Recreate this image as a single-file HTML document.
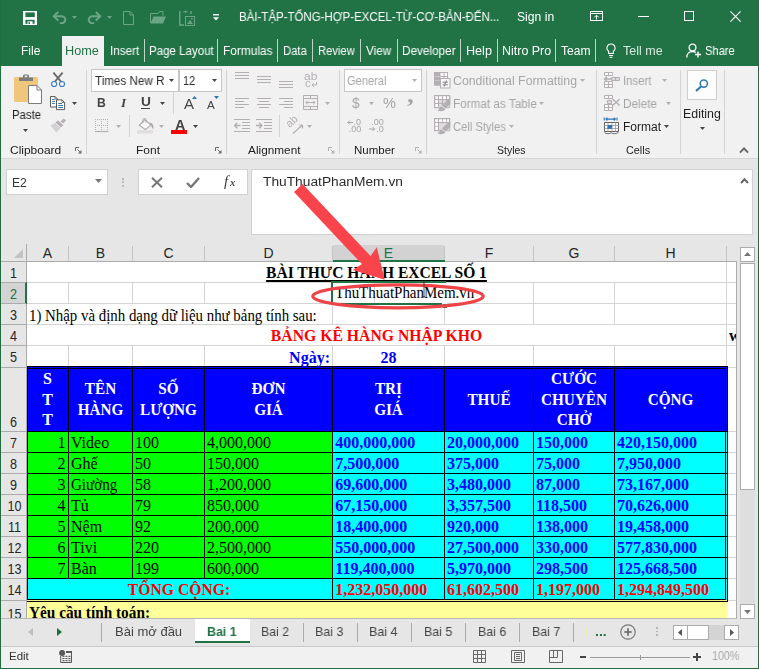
<!DOCTYPE html>
<html lang="vi">
<head>
<meta charset="utf-8">
<title>Excel</title>
<style>
*{box-sizing:border-box;margin:0;padding:0}
html,body{width:759px;height:669px;overflow:hidden;background:#e6e6e6}
body{position:relative;font-family:"Liberation Sans","DejaVu Sans",sans-serif;font-size:12px;color:#262626}
.abs{position:absolute}
.tx{position:absolute;white-space:nowrap;will-change:transform}
#win{position:absolute;left:0;top:0;width:759px;height:669px;overflow:hidden;background:#e6e6e6}
/* frame */
#bl{left:0;top:0;width:1px;height:669px;background:#1e6e40}
#br{left:758px;top:0;width:1px;height:669px;background:#1e6e40}
#bb{left:0;top:668px;width:759px;height:1px;background:#1e6e40}
/* title + tabs */
#title{left:0;top:0;width:759px;height:66px;background:#217346}
.tt{position:absolute;color:#fff;font-size:13px;white-space:nowrap;line-height:16px}
.tab{position:absolute;top:43px;color:#fff;font-size:13px;line-height:16px;white-space:nowrap}
.tsep{position:absolute;top:39px;width:1px;height:23px;background:#9fc3ae}
#home{left:62px;top:36px;width:42px;height:30px;background:#f1f1f1}
#home span{position:absolute;left:4px;top:7px;color:#217346;font-size:13px;line-height:16px}
/* ribbon */
#ribbon{left:1px;top:66px;width:757px;height:92px;background:#f1f1f1}
#ribline{left:1px;top:158px;width:757px;height:1px;background:#d6d6d6}
.gsep{position:absolute;top:71px;width:1px;height:83px;background:#d2d2d2}
.glabel{position:absolute;top:142px;font-size:12px;line-height:14px;color:#262626;white-space:nowrap}
.rt{position:absolute;font-size:12px;line-height:14px;white-space:nowrap;color:#262626}
.dis{color:#a6a6a6}
.combo{position:absolute;background:#fff;border:1px solid #c6c6c6;height:22px;top:70px}
/* formula bar */
.fbox{position:absolute;background:#fff;border:1px solid #d0d0d0}
/* grid */
#grid{left:2px;top:244px;width:735px;height:373px;background:#fff;overflow:hidden}
.ch{position:absolute;top:244px;height:18px;background:#e6e6e6;font-size:14px;line-height:18px;text-align:center;color:#262626}
.rh{position:absolute;left:1px;width:25px;background:#e6e6e6;font-size:14px;line-height:16px;text-align:center;color:#262626}
.hl{position:absolute;height:1px;background:#d4d4d4}
.vl{position:absolute;width:1px;background:#d4d4d4}
.c{position:absolute;white-space:nowrap;font-family:"Liberation Serif","DejaVu Serif",serif;font-size:16px;line-height:20px;color:#000}
.b{font-weight:bold}
/* sheet tabs + status */
#tabsbar{left:2px;top:617px;width:755px;height:28px;background:#e6e6e6}
#status{left:2px;top:645px;width:755px;height:22px;background:#f1f1f1}
.st{position:absolute;top:624px;font-size:13px;line-height:16px;color:#444;white-space:nowrap}
.ssep{position:absolute;top:622px;width:1px;height:19px;background:#b4b4b4}
</style>
</head>
<body>
<div id="win">
<div id="title" class="abs"></div>
<div id="ribbon" class="abs"></div>
<div id="ribline" class="abs"></div>

<svg class="abs" style="left:23px;top:11px;" width="14" height="14" viewBox="0 0 14 14"><rect x="0" y="0" width="14" height="14" fill="#fff"/><rect x="2.4" y="1.4" width="9.4" height="4.7" fill="#217346"/><rect x="2.4" y="8.8" width="9.2" height="4" fill="#217346"/><rect x="4.5" y="10.3" width="5.1" height="3.7" fill="#fff"/><rect x="5.4" y="11.2" width="1.6" height="1.7" fill="#217346"/></svg>
<svg class="abs" style="left:52px;top:11px;" width="15" height="13" viewBox="0 0 15 13"><path d="M6.2 1L1.7 5.2L6.2 9.4" fill="none" stroke="#6aa685" stroke-width="2"/><path d="M2 5.2H9.3A4 3.5 0 0 1 9.3 12.2H7.8" fill="none" stroke="#6aa685" stroke-width="2"/></svg>
<svg class="abs" style="left:72px;top:16px;" width="5" height="3" viewBox="0 0 5 3"><path d="M0 0H5L2.5 3Z" fill="#6aa685"/></svg>
<svg class="abs" style="left:87px;top:11px;" width="15" height="13" viewBox="0 0 15 13"><path d="M8.8 1L13.3 5.2L8.8 9.4" fill="none" stroke="#6aa685" stroke-width="2"/><path d="M13 5.2H5.7A4 3.5 0 0 0 5.7 12.2H7.2" fill="none" stroke="#6aa685" stroke-width="2"/></svg>
<svg class="abs" style="left:107px;top:16px;" width="5" height="3" viewBox="0 0 5 3"><path d="M0 0H5L2.5 3Z" fill="#6aa685"/></svg>
<svg class="abs" style="left:123px;top:11px;" width="11" height="14" viewBox="0 0 11 14"><path d="M0.5 0.5H7L10.5 4V13.5H0.5Z" fill="none" stroke="#6aa685" stroke-width="1"/><path d="M7 0.5V4H10.5" fill="none" stroke="#6aa685" stroke-width="1"/></svg>
<svg class="abs" style="left:150px;top:11px;" width="16" height="13" viewBox="0 0 16 13"><path d="M0.5 12V2.5H8L9.5 0.5H13V5" fill="none" stroke="#6aa685" stroke-width="1"/><path d="M0.5 12.5L3.5 5.5H16L13 12.5Z" fill="#6aa685"/></svg>
<svg class="abs" style="left:179px;top:10px;" width="16" height="16" viewBox="0 0 16 16"><path d="M0.8 1V15H5" fill="none" stroke="#6aa685" stroke-width="1.4"/><path d="M3.5 2.5L6.5 0.5L9.5 2.5Z" fill="#6aa685"/><path d="M12 1V4" stroke="#6aa685" stroke-width="1.4"/><rect x="6.5" y="6.5" width="9" height="9" fill="none" stroke="#6aa685" stroke-width="1"/><path d="M8 14L11 10L14 14Z" fill="#6aa685"/><rect x="12" y="8" width="1.6" height="1.6" fill="#6aa685"/></svg>
<svg class="abs" style="left:212.5px;top:14.3px;" width="6" height="7" viewBox="0 0 6 7"><rect x="0" y="0" width="6" height="1.4" fill="#fff"/><path d="M0 3.2H6L3 6.4Z" fill="#fff"/></svg>
<span class="tx" style="left:239.04px;top:10.34px;font-family:'Liberation Sans','DejaVu Sans',sans-serif;font-size:12px;line-height:14px;color:#fff;transform:scaleX(0.9567);transform-origin:0 0;">BÀI-TẬP-TỔNG-HỢP-EXCEL-TỪ-CƠ-BẢN-ĐẾN...</span>
<span class="tx" style="left:517.49px;top:10.34px;font-family:'Liberation Sans','DejaVu Sans',sans-serif;font-size:12px;line-height:14px;color:#fff;transform:scaleX(1.0141);transform-origin:0 0;">Sign in</span>
<svg class="abs" style="left:590px;top:11px;" width="13" height="10" viewBox="0 0 13 10"><rect x="0.5" y="0.5" width="12" height="9" fill="none" stroke="#fff" stroke-width="1"/><path d="M0.5 2.5H12.5" stroke="#fff" stroke-width="1"/><path d="M6.5 4.5V8.5M4.3 6.4L6.5 4.2L8.7 6.4" fill="none" stroke="#fff" stroke-width="1"/></svg>
<div class="abs" style="left:638px;top:16px;width:11px;height:1px;background:#fff;"></div>
<div class="abs" style="left:684px;top:11px;width:10px;height:10px;background:transparent;border:1px solid #fff"></div>
<svg class="abs" style="left:729.5px;top:11px;" width="11" height="11" viewBox="0 0 11 11"><path d="M0.4 0.4L10.6 10.6M10.6 0.4L0.4 10.6" stroke="#fff" stroke-width="1.1"/></svg>
<span class="tx" style="left:20.50px;top:43.84px;font-family:'Liberation Sans','DejaVu Sans',sans-serif;font-size:12px;line-height:14px;color:#fff;transform:scaleX(1.0000);transform-origin:0 0;">File</span>
<div class="abs" style="left:62px;top:36px;width:42px;height:30px;background:#f1f1f1;"></div>
<span class="tx" style="left:65.44px;top:43.84px;font-family:'Liberation Sans','DejaVu Sans',sans-serif;font-size:12px;line-height:14px;color:#217346;transform:scaleX(1.0557);transform-origin:0 0;">Home</span>
<span class="tx" style="left:109.83px;top:43.84px;font-family:'Liberation Sans','DejaVu Sans',sans-serif;font-size:12px;line-height:14px;color:#fff;transform:scaleX(0.9724);transform-origin:0 0;">Insert</span>
<span class="tx" style="left:148.84px;top:43.84px;font-family:'Liberation Sans','DejaVu Sans',sans-serif;font-size:12px;line-height:14px;color:#fff;transform:scaleX(0.9600);transform-origin:0 0;">Page Layout</span>
<span class="tx" style="left:222.81px;top:43.84px;font-family:'Liberation Sans','DejaVu Sans',sans-serif;font-size:12px;line-height:14px;color:#fff;transform:scaleX(0.9897);transform-origin:0 0;">Formulas</span>
<span class="tx" style="left:282.86px;top:43.84px;font-family:'Liberation Sans','DejaVu Sans',sans-serif;font-size:12px;line-height:14px;color:#fff;transform:scaleX(0.9388);transform-origin:0 0;">Data</span>
<span class="tx" style="left:317.97px;top:43.84px;font-family:'Liberation Sans','DejaVu Sans',sans-serif;font-size:12px;line-height:14px;color:#fff;transform:scaleX(0.9325);transform-origin:0 0;">Review</span>
<span class="tx" style="left:366.20px;top:43.84px;font-family:'Liberation Sans','DejaVu Sans',sans-serif;font-size:12px;line-height:14px;color:#fff;transform:scaleX(0.9709);transform-origin:0 0;">View</span>
<span class="tx" style="left:401.62px;top:43.84px;font-family:'Liberation Sans','DejaVu Sans',sans-serif;font-size:12px;line-height:14px;color:#fff;transform:scaleX(0.9794);transform-origin:0 0;">Developer</span>
<span class="tx" style="left:465.55px;top:43.84px;font-family:'Liberation Sans','DejaVu Sans',sans-serif;font-size:12px;line-height:14px;color:#fff;transform:scaleX(1.0495);transform-origin:0 0;">Help</span>
<span class="tx" style="left:501.56px;top:43.84px;font-family:'Liberation Sans','DejaVu Sans',sans-serif;font-size:12px;line-height:14px;color:#fff;transform:scaleX(1.0391);transform-origin:0 0;">Nitro Pro</span>
<span class="tx" style="left:561.05px;top:43.84px;font-family:'Liberation Sans','DejaVu Sans',sans-serif;font-size:12px;line-height:14px;color:#fff;transform:scaleX(1.0070);transform-origin:0 0;">Team</span>
<div class="abs" style="left:144px;top:39px;width:1px;height:23px;background:#bcd5c6;"></div>
<div class="abs" style="left:217px;top:39px;width:1px;height:23px;background:#bcd5c6;"></div>
<div class="abs" style="left:277px;top:39px;width:1px;height:23px;background:#bcd5c6;"></div>
<div class="abs" style="left:312px;top:39px;width:1px;height:23px;background:#bcd5c6;"></div>
<div class="abs" style="left:360px;top:39px;width:1px;height:23px;background:#bcd5c6;"></div>
<div class="abs" style="left:397px;top:39px;width:1px;height:23px;background:#bcd5c6;"></div>
<div class="abs" style="left:460px;top:39px;width:1px;height:23px;background:#bcd5c6;"></div>
<div class="abs" style="left:497px;top:39px;width:1px;height:23px;background:#bcd5c6;"></div>
<div class="abs" style="left:555px;top:39px;width:1px;height:23px;background:#bcd5c6;"></div>
<div class="abs" style="left:595px;top:39px;width:1px;height:23px;background:#bcd5c6;"></div>
<svg class="abs" style="left:606px;top:43px;" width="10" height="15" viewBox="0 0 10 15"><path d="M5 1A4 4 0 0 1 7.3 8.3V10.5H2.7V8.3A4 4 0 0 1 5 1Z" fill="none" stroke="#fff" stroke-width="1.1"/><path d="M3 12.5H7M3.6 14.3H6.4" stroke="#fff" stroke-width="1"/></svg>
<span class="tx" style="left:622.94px;top:43.84px;font-family:'Liberation Sans','DejaVu Sans',sans-serif;font-size:12px;line-height:14px;color:#d9e8df;transform:scaleX(1.0416);transform-origin:0 0;">Tell me</span>
<svg class="abs" style="left:686px;top:43px;" width="16" height="15" viewBox="0 0 16 15"><circle cx="6.5" cy="4.5" r="3.4" fill="none" stroke="#fff" stroke-width="1.3"/><path d="M0.8 14.5C0.8 10.5 3.5 8.5 6.5 8.5C8 8.5 9 9 9.8 9.6" fill="none" stroke="#fff" stroke-width="1.3"/><path d="M12 8.5V14.5M9 11.5H15" stroke="#fff" stroke-width="1.4"/></svg>
<span class="tx" style="left:704.54px;top:43.84px;font-family:'Liberation Sans','DejaVu Sans',sans-serif;font-size:12px;line-height:14px;color:#fff;transform:scaleX(0.9290);transform-origin:0 0;">Share</span>
<svg class="abs" style="left:13px;top:73px;" width="30" height="32" viewBox="0 0 30 32"><rect x="1" y="4" width="24" height="25" rx="1.5" fill="#eec67c"/><path d="M6 8V4.5H10V3A1.5 1.5 0 0 1 11.5 1.5H14.5A1.5 1.5 0 0 1 16 3V4.5H20V8Z" fill="#7c7c7c"/><rect x="11.7" y="2.6" width="2.6" height="1.6" fill="#f1f1f1"/><path d="M15.5 12.5H24L28.5 17V30.5H15.5Z" fill="#fff" stroke="#7c7c7c" stroke-width="1"/><path d="M24 12.5V17H28.5" fill="none" stroke="#7c7c7c" stroke-width="1"/></svg>
<span class="tx" style="left:11.66px;top:107.54px;font-family:'Liberation Sans','DejaVu Sans',sans-serif;font-size:12px;line-height:14px;color:#1e1e1e;transform:scaleX(0.9436);transform-origin:0 0;">Paste</span>
<svg class="abs" style="left:23px;top:129px;" width="5" height="3" viewBox="0 0 5 3"><path d="M0 0H5L2.5 3Z" fill="#444444"/></svg>
<svg class="abs" style="left:50px;top:72px;" width="16" height="16" viewBox="0 0 16 16"><path d="M3.4 0.6L11.4 10M12.6 0.6L4.6 10" stroke="#686868" stroke-width="1.9" fill="none"/><circle cx="4.1" cy="12" r="2.55" fill="#f1f1f1" stroke="#3b7dc0" stroke-width="1.1"/><circle cx="12" cy="12" r="2.55" fill="#f1f1f1" stroke="#3b7dc0" stroke-width="1.1"/></svg>
<svg class="abs" style="left:50px;top:96px;" width="16" height="15" viewBox="0 0 16 15"><path d="M0.5 0.5H5L7.5 3V11H0.5Z" fill="#fff" stroke="#5a5a5a" stroke-width="1"/><path d="M5 0.5V3H7.5" fill="none" stroke="#5a5a5a" stroke-width="0.8"/><path d="M2 3.5H4.6M2 5.5H5M2 7.5H5" stroke="#2e75b6" stroke-width="0.9"/><path d="M6.5 3.9H12L14.6 6.5V13.6H6.5Z" fill="#fff" stroke="#5a5a5a" stroke-width="1"/><path d="M12 3.9V6.5H14.6" fill="none" stroke="#5a5a5a" stroke-width="0.8"/><path d="M8.3 7.5H12M8.3 9.5H13M8.3 11.5H13" stroke="#2e75b6" stroke-width="1"/></svg>
<svg class="abs" style="left:72px;top:102px;" width="5" height="3" viewBox="0 0 5 3"><path d="M0 0H5L2.5 3Z" fill="#444444"/></svg>
<svg class="abs" style="left:50px;top:118px;" width="17" height="15" viewBox="0 0 17 15"><path d="M0.5 7.8L6.6 14.4L11 9.5L5.5 4.5Z" fill="#d3cfd3"/><path d="M5.5 4.5L11 9.5L13.4 7.2L8 2.2Z" fill="#b5b1b5"/><path d="M10.6 3.2L13 5.4L16 2.6L13.6 0.6Z" fill="#b5b1b5"/><path d="M5.2 4.8L10.8 9.9" stroke="#f1f1f1" stroke-width="0.7"/></svg>
<span class="tx" style="left:10.03px;top:143.66px;font-family:'Liberation Sans','DejaVu Sans',sans-serif;font-size:10.5px;line-height:13px;color:#1e1e1e;transform:scaleX(1.1383);transform-origin:0 0;">Clipboard</span>
<svg class="abs" style="left:75px;top:147px;" width="7" height="7" viewBox="0 0 7 7"><path d="M0.5 4V0.5H4" fill="none" stroke="#6a6a6a" stroke-width="1"/><path d="M2.5 2.5L6 6" stroke="#6a6a6a" stroke-width="1"/><path d="M6.5 3V6.5H3Z" fill="#6a6a6a"/></svg>
<div class="abs" style="left:86px;top:70px;width:1px;height:84px;background:#d4d4d4;"></div>
<div class="abs" style="left:91px;top:69px;width:88px;height:23px;background:#fff;border:1px solid #c6c6c6"></div>
<div class="abs" style="left:179px;top:69px;width:43px;height:23px;background:#fff;border:1px solid #c6c6c6;border-left:1px solid #c6c6c6"></div>
<span class="tx" style="left:94.76px;top:73.64px;font-family:'Liberation Sans','DejaVu Sans',sans-serif;font-size:12px;line-height:14px;color:#2b2b2b;transform:scaleX(0.9696);transform-origin:0 0;">Times New R</span>
<svg class="abs" style="left:169px;top:79px;" width="5" height="3" viewBox="0 0 5 3"><path d="M0 0H5L2.5 3Z" fill="#444444"/></svg>
<span class="tx" style="left:182.50px;top:73.64px;font-family:'Liberation Sans','DejaVu Sans',sans-serif;font-size:12px;line-height:14px;color:#2b2b2b;transform:scaleX(0.9021);transform-origin:0 0;">12</span>
<svg class="abs" style="left:212px;top:79px;" width="5" height="3" viewBox="0 0 5 3"><path d="M0 0H5L2.5 3Z" fill="#444444"/></svg>
<span class="tx" style="left:96.84px;top:95.64px;font-family:'Liberation Sans','DejaVu Sans',sans-serif;font-size:12px;line-height:14px;color:#444444;font-weight:700;transform:scaleX(1.0133);transform-origin:0 0;">B</span>
<span class="tx" style="left:121.00px;top:95.75px;font-family:'Liberation Serif','DejaVu Serif',serif;font-size:12px;line-height:14px;color:#444444;font-weight:700;font-style:italic;transform:scaleX(1.1000);transform-origin:0 0;">I</span>
<span class="tx" style="left:140.64px;top:95.24px;font-family:'Liberation Sans','DejaVu Sans',sans-serif;font-size:12px;line-height:14px;color:#444444;font-weight:700;transform:scaleX(1.1448);transform-origin:0 0;">U</span>
<div class="abs" style="left:141px;top:108px;width:9px;height:1px;background:#444444;"></div>
<svg class="abs" style="left:160px;top:102px;" width="5" height="3" viewBox="0 0 5 3"><path d="M0 0H5L2.5 3Z" fill="#444444"/></svg>
<div class="abs" style="left:173px;top:92px;width:1px;height:22px;background:#d4d4d4;"></div>
<span class="tx" style="left:184.10px;top:95.75px;font-family:'Liberation Sans','DejaVu Sans',sans-serif;font-size:14px;line-height:17px;color:#444444;transform:scaleX(1.0703);transform-origin:0 0;">A</span>
<svg class="abs" style="left:192px;top:96px;" width="5" height="3" viewBox="0 0 5 3"><path d="M0 3H5L2.5 0Z" fill="#2e75b6"/></svg>
<span class="tx" style="left:207.10px;top:98.72px;font-family:'Liberation Sans','DejaVu Sans',sans-serif;font-size:11.2px;line-height:13px;color:#444444;transform:scaleX(1.0400);transform-origin:0 0;">A</span>
<svg class="abs" style="left:214px;top:96px;" width="5" height="3" viewBox="0 0 5 3"><path d="M0 0H5L2.5 3Z" fill="#2e75b6"/></svg>
<svg class="abs" style="left:95px;top:119px;" width="14" height="14" viewBox="0 0 14 14"><path d="M0 0.5H13M0 6.5H13M0.5 0V12M6.5 0V12M12.5 0V12" stroke="#b3afb3" stroke-width="1" stroke-dasharray="1 1" fill="none" shape-rendering="crispEdges"/><path d="M0 12.5H13.5" stroke="#b3afb3" stroke-width="1.2"/></svg>
<svg class="abs" style="left:116px;top:125px;" width="5" height="3" viewBox="0 0 5 3"><path d="M0 0H5L2.5 3Z" fill="#b3afb3"/></svg>
<div class="abs" style="left:129px;top:115px;width:1px;height:22px;background:#d4d4d4;"></div>
<svg class="abs" style="left:137px;top:117px;" width="18" height="17" viewBox="0 0 18 17"><path d="M2.3 8.2L8 2.6L14.1 8.2L8.3 12.4Z" fill="#f8f8f8" stroke="#b3afb3" stroke-width="1.2"/><path d="M5.9 6.2V3A1.5 1.5 0 0 1 8.9 3V5.8" fill="none" stroke="#b3afb3" stroke-width="1.1"/><path d="M12.4 5.4C15.6 5.8 17 8 16.3 12.2C15 10.9 14.5 9.6 14.3 8.3Z" fill="#aaa6aa"/><rect x="0.2" y="13.1" width="15.8" height="3.5" fill="#e0dde0"/></svg>
<svg class="abs" style="left:159px;top:125px;" width="5" height="3" viewBox="0 0 5 3"><path d="M0 0H5L2.5 3Z" fill="#b3afb3"/></svg>
<span class="tx" style="left:174.54px;top:117.12px;font-family:'Liberation Sans','DejaVu Sans',sans-serif;font-size:13.8px;line-height:17px;color:#444444;font-weight:700;transform:scaleX(1.0378);transform-origin:0 0;">A</span>
<div class="abs" style="left:171px;top:130px;width:16px;height:4px;background:#ff0000;"></div>
<svg class="abs" style="left:193px;top:125px;" width="5" height="3" viewBox="0 0 5 3"><path d="M0 0H5L2.5 3Z" fill="#444444"/></svg>
<span class="tx" style="left:135.64px;top:143.66px;font-family:'Liberation Sans','DejaVu Sans',sans-serif;font-size:10.5px;line-height:13px;color:#1e1e1e;transform:scaleX(1.1407);transform-origin:0 0;">Font</span>
<svg class="abs" style="left:215px;top:147px;" width="7" height="7" viewBox="0 0 7 7"><path d="M0.5 4V0.5H4" fill="none" stroke="#6a6a6a" stroke-width="1"/><path d="M2.5 2.5L6 6" stroke="#6a6a6a" stroke-width="1"/><path d="M6.5 3V6.5H3Z" fill="#6a6a6a"/></svg>
<div class="abs" style="left:226px;top:70px;width:1px;height:84px;background:#d4d4d4;"></div>
<div class="abs" style="left:235px;top:72px;width:14px;height:1px;background:#b3afb3;"></div><div class="abs" style="left:235px;top:75px;width:14px;height:1px;background:#b3afb3;"></div><div class="abs" style="left:235px;top:78px;width:14px;height:1px;background:#b3afb3;"></div>
<div class="abs" style="left:257px;top:76px;width:14px;height:1px;background:#b3afb3;"></div><div class="abs" style="left:257px;top:79px;width:14px;height:1px;background:#b3afb3;"></div><div class="abs" style="left:257px;top:82px;width:14px;height:1px;background:#b3afb3;"></div>
<div class="abs" style="left:279px;top:81px;width:14px;height:1px;background:#b3afb3;"></div><div class="abs" style="left:279px;top:84px;width:14px;height:1px;background:#b3afb3;"></div><div class="abs" style="left:279px;top:87px;width:14px;height:1px;background:#b3afb3;"></div>
<span class="tx" style="left:304.13px;top:70.06px;font-family:'Liberation Sans','DejaVu Sans',sans-serif;font-size:10.5px;line-height:13px;color:#b3afb3;transform:scaleX(1.1442);transform-origin:0 0;">ab</span>
<span class="tx" style="left:304.94px;top:77.06px;font-family:'Liberation Sans','DejaVu Sans',sans-serif;font-size:10.5px;line-height:13px;color:#b3afb3;transform:scaleX(1.1111);transform-origin:0 0;">c</span>
<svg class="abs" style="left:311px;top:82px;" width="6" height="5" viewBox="0 0 6 5"><path d="M5.5 0V3H1.2M2.8 1.2L1 3L2.8 4.8" fill="none" stroke="#b3afb3" stroke-width="1"/></svg>
<div class="abs" style="left:235px;top:98px;width:14px;height:1px;background:#b3afb3;"></div><div class="abs" style="left:235px;top:101px;width:9px;height:1px;background:#b3afb3;"></div><div class="abs" style="left:235px;top:104px;width:14px;height:1px;background:#b3afb3;"></div><div class="abs" style="left:235px;top:107px;width:9px;height:1px;background:#b3afb3;"></div>
<div class="abs" style="left:257px;top:98px;width:14px;height:1px;background:#b3afb3;"></div><div class="abs" style="left:259px;top:101px;width:10px;height:1px;background:#b3afb3;"></div><div class="abs" style="left:257px;top:104px;width:14px;height:1px;background:#b3afb3;"></div><div class="abs" style="left:259px;top:107px;width:10px;height:1px;background:#b3afb3;"></div>
<div class="abs" style="left:279px;top:98px;width:14px;height:1px;background:#b3afb3;"></div><div class="abs" style="left:284px;top:101px;width:9px;height:1px;background:#b3afb3;"></div><div class="abs" style="left:279px;top:104px;width:14px;height:1px;background:#b3afb3;"></div><div class="abs" style="left:284px;top:107px;width:9px;height:1px;background:#b3afb3;"></div>
<svg class="abs" style="left:303px;top:95px;" width="15" height="15" viewBox="0 0 15 15"><path d="M0.5 0.5H14.5V14.5H0.5ZM0.5 3.5H14.5M0.5 11.5H14.5M7.5 0.5V3.5M7.5 11.5V14.5" fill="none" stroke="#b3afb3" stroke-width="1"/><path d="M3 7.5H12M4.8 5.7L3 7.5L4.8 9.3M10.2 5.7L12 7.5L10.2 9.3" fill="none" stroke="#b3afb3" stroke-width="1"/></svg>
<svg class="abs" style="left:325px;top:102px;" width="5" height="3" viewBox="0 0 5 3"><path d="M0 0H5L2.5 3Z" fill="#b3afb3"/></svg>
<svg class="abs" style="left:234px;top:119px;" width="16" height="14" viewBox="0 0 16 14"><path d="M0 0.5H16M8 3.5H16M8 6.5H16M8 9.5H16M0 12.5H16" stroke="#b3afb3" stroke-width="1"/><path d="M6.5 6.5H0.8M3.3 3.8L0.6 6.5L3.3 9.2" fill="none" stroke="#b3afb3" stroke-width="1.4"/></svg>
<svg class="abs" style="left:256px;top:119px;" width="16" height="14" viewBox="0 0 16 14"><path d="M0 0.5H16M8 3.5H16M8 6.5H16M8 9.5H16M0 12.5H16" stroke="#b3afb3" stroke-width="1"/><path d="M0 6.5H5.7M3.2 3.8L5.9 6.5L3.2 9.2" fill="none" stroke="#b3afb3" stroke-width="1.4"/></svg>
<div class="abs" style="left:279px;top:115px;width:1px;height:22px;background:#d4d4d4;"></div>
<svg class="abs" style="left:286px;top:116px;" width="19" height="19" viewBox="0 0 19 19"><text x="0" y="0" transform="translate(3.5,12) rotate(-42)" font-family="Liberation Sans,sans-serif" font-size="11" fill="#b3afb3">ab</text><path d="M7 17.5L16.5 9M16.5 9H13M16.5 9V12.4" fill="none" stroke="#b3afb3" stroke-width="1.2"/></svg>
<svg class="abs" style="left:307px;top:125px;" width="5" height="3" viewBox="0 0 5 3"><path d="M0 0H5L2.5 3Z" fill="#b3afb3"/></svg>
<span class="tx" style="left:248.00px;top:143.66px;font-family:'Liberation Sans','DejaVu Sans',sans-serif;font-size:10.5px;line-height:13px;color:#1e1e1e;transform:scaleX(1.1251);transform-origin:0 0;">Alignment</span>
<svg class="abs" style="left:328px;top:147px;" width="7" height="7" viewBox="0 0 7 7"><path d="M0.5 4V0.5H4" fill="none" stroke="#b3afb3" stroke-width="1"/><path d="M2.5 2.5L6 6" stroke="#b3afb3" stroke-width="1"/><path d="M6.5 3V6.5H3Z" fill="#b3afb3"/></svg>
<div class="abs" style="left:339px;top:70px;width:1px;height:84px;background:#d4d4d4;"></div>
<div class="abs" style="left:344px;top:69px;width:78px;height:23px;background:#fff;border:1px solid #c6c6c6"></div>
<span class="tx" style="left:347.34px;top:73.64px;font-family:'Liberation Sans','DejaVu Sans',sans-serif;font-size:12px;line-height:14px;color:#a6a6a6;transform:scaleX(0.9253);transform-origin:0 0;">General</span>
<svg class="abs" style="left:412px;top:79px;" width="5" height="3" viewBox="0 0 5 3"><path d="M0 0H5L2.5 3Z" fill="#b3afb3"/></svg>
<span class="tx" style="left:351.78px;top:93.13px;font-family:'Liberation Sans','DejaVu Sans',sans-serif;font-size:15.5px;line-height:19px;color:#a6a6a6;transform:scaleX(0.8848);transform-origin:0 0;">$</span>
<svg class="abs" style="left:369px;top:102px;" width="5" height="3" viewBox="0 0 5 3"><path d="M0 0H5L2.5 3Z" fill="#b3afb3"/></svg>
<span class="tx" style="left:383.30px;top:95.08px;font-family:'Liberation Sans','DejaVu Sans',sans-serif;font-size:14.5px;line-height:17px;color:#a6a6a6;transform:scaleX(0.9917);transform-origin:0 0;">%</span>
<span class="tx" style="left:407.11px;top:80.54px;font-family:'Liberation Serif','DejaVu Serif',serif;font-size:23px;line-height:28px;color:#a6a6a6;font-weight:700;transform:scaleX(1.1789);transform-origin:0 0;">,</span>
<svg class="abs" style="left:347px;top:119px;" width="16" height="14" viewBox="0 0 16 14"><path d="M6 3.5H0.8M2.8 1.5L0.8 3.5L2.8 5.5" fill="none" stroke="#a6a6a6" stroke-width="1"/><text x="6.5" y="6" font-family="Liberation Sans,sans-serif" font-size="9" fill="#a6a6a6">.0</text><text x="1.8" y="12.8" font-family="Liberation Sans,sans-serif" font-size="9" fill="#a6a6a6">.00</text></svg>
<svg class="abs" style="left:369px;top:119px;" width="16" height="14" viewBox="0 0 16 14"><text x="2.2" y="6" font-family="Liberation Sans,sans-serif" font-size="9" fill="#a6a6a6">.00</text><path d="M0 10H5.6M3.6 8L5.6 10L3.6 12" fill="none" stroke="#a6a6a6" stroke-width="1"/><text x="7.2" y="12.8" font-family="Liberation Sans,sans-serif" font-size="9" fill="#a6a6a6">.0</text></svg>
<span class="tx" style="left:353.78px;top:143.66px;font-family:'Liberation Sans','DejaVu Sans',sans-serif;font-size:10.5px;line-height:13px;color:#1e1e1e;transform:scaleX(1.0959);transform-origin:0 0;">Number</span>
<svg class="abs" style="left:415px;top:147px;" width="7" height="7" viewBox="0 0 7 7"><path d="M0.5 4V0.5H4" fill="none" stroke="#b3afb3" stroke-width="1"/><path d="M2.5 2.5L6 6" stroke="#b3afb3" stroke-width="1"/><path d="M6.5 3V6.5H3Z" fill="#b3afb3"/></svg>
<div class="abs" style="left:426px;top:70px;width:1px;height:84px;background:#d4d4d4;"></div>
<svg class="abs" style="left:434px;top:72px;" width="17" height="17" viewBox="0 0 17 17"><rect x="0.5" y="0.5" width="13" height="12.5" fill="#fafafa" stroke="#b3afb3" stroke-width="1"/><rect x="0" y="0" width="6.5" height="13.5" fill="#b3afb3"/><path d="M0.5 4.5H6.5M0.5 8.5H6.5" stroke="#cdcacd" stroke-width="0.8"/><path d="M10 0.5V7M6.5 4.5H13.5" stroke="#b3afb3" stroke-width="1"/><rect x="6.5" y="6.5" width="9.5" height="9.5" fill="#f6f6f6" stroke="#b3afb3" stroke-width="1"/><path d="M8.6 10.2H13.9M8.6 12.8H13.9M12.6 8.4L9.9 14.4" stroke="#8a878a" stroke-width="1.1"/></svg>
<span class="tx" style="left:453.19px;top:73.64px;font-family:'Liberation Sans','DejaVu Sans',sans-serif;font-size:12px;line-height:14px;color:#a6a6a6;transform:scaleX(1.0276);transform-origin:0 0;">Conditional Formatting</span>
<svg class="abs" style="left:580px;top:79px;" width="5" height="3" viewBox="0 0 5 3"><path d="M0 0H5L2.5 3Z" fill="#b3afb3"/></svg>
<svg class="abs" style="left:434px;top:95px;" width="17" height="17" viewBox="0 0 17 17"><rect x="0.6" y="0.6" width="15" height="12" fill="#fafafa" stroke="#b3afb3" stroke-width="1.2"/><rect x="4.5" y="4.5" width="11" height="8" fill="#dedbde"/><path d="M4.5 0.5V12.5M8.5 0.5V12.5M12.5 0.5V12.5M0.5 4.5H15.5M0.5 8.5H15.5" fill="none" stroke="#b3afb3" stroke-width="1"/><path d="M16.3 2.4V9.2L11 13.6L7.2 11.2Z" fill="#b3afb3"/><path d="M6.8 10.4L11.8 14.2" stroke="#ececec" stroke-width="0.9"/><path d="M7 11.4C5.2 11.8 5.6 14.2 3.4 15.7C7.4 16.7 11 15.9 11.4 14Z" fill="#b3afb3"/></svg>
<svg class="abs" style="left:434px;top:118px;" width="17" height="17" viewBox="0 0 17 17"><rect x="0.6" y="0.6" width="15" height="12" fill="#fafafa" stroke="#b3afb3" stroke-width="1.2"/><rect x="4.5" y="4.5" width="11" height="8" fill="#dedbde"/><path d="M4.5 0.5V12.5M0.5 4.5H15.5" fill="none" stroke="#b3afb3" stroke-width="1"/><path d="M0.5 8.5H4.5M8.5 0.5V4.5M12.5 0.5V4.5" fill="none" stroke="#b3afb3" stroke-width="0.8"/><path d="M16.3 2.4V9.2L11 13.6L7.2 11.2Z" fill="#b3afb3"/><path d="M6.8 10.4L11.8 14.2" stroke="#ececec" stroke-width="0.9"/><path d="M7 11.4C5.2 11.8 5.6 14.2 3.4 15.7C7.4 16.7 11 15.9 11.4 14Z" fill="#b3afb3"/></svg>
<span class="tx" style="left:452.72px;top:96.84px;font-family:'Liberation Sans','DejaVu Sans',sans-serif;font-size:12px;line-height:14px;color:#a6a6a6;transform:scaleX(0.9769);transform-origin:0 0;">Format as Table</span>
<svg class="abs" style="left:539px;top:102px;" width="5" height="3" viewBox="0 0 5 3"><path d="M0 0H5L2.5 3Z" fill="#b3afb3"/></svg>
<span class="tx" style="left:453.23px;top:119.64px;font-family:'Liberation Sans','DejaVu Sans',sans-serif;font-size:12px;line-height:14px;color:#a6a6a6;transform:scaleX(0.9327);transform-origin:0 0;">Cell Styles</span>
<svg class="abs" style="left:509px;top:125px;" width="5" height="3" viewBox="0 0 5 3"><path d="M0 0H5L2.5 3Z" fill="#b3afb3"/></svg>
<span class="tx" style="left:497.00px;top:143.66px;font-family:'Liberation Sans','DejaVu Sans',sans-serif;font-size:10.5px;line-height:13px;color:#1e1e1e;transform:scaleX(0.9910);transform-origin:0 0;">Styles</span>
<div class="abs" style="left:596px;top:70px;width:1px;height:84px;background:#d4d4d4;"></div>
<svg class="abs" style="left:603px;top:72px;" width="18" height="16" viewBox="0 0 18 16"><path d="M1.5 0.5H9.5V3.5H1.5ZM5.5 0.5V3.5M1.5 9.5H9.5V15.5H1.5ZM5.5 9.5V15.5M1.5 12.5H9.5" fill="#f8f8f8" stroke="#b3afb3" stroke-width="1"/><path d="M8.5 5.5H16.5V8.5H8.5ZM12.5 5.5V8.5" fill="#dedbde" stroke="#b3afb3" stroke-width="1"/><path d="M8 7H1.6M3.9 4.7L1.5 7L3.9 9.3" fill="none" stroke="#b3afb3" stroke-width="1.4"/></svg>
<span class="tx" style="left:623.36px;top:73.64px;font-family:'Liberation Sans','DejaVu Sans',sans-serif;font-size:12px;line-height:14px;color:#a6a6a6;transform:scaleX(0.9448);transform-origin:0 0;">Insert</span>
<svg class="abs" style="left:662px;top:79px;" width="5" height="3" viewBox="0 0 5 3"><path d="M0 0H5L2.5 3Z" fill="#b3afb3"/></svg>
<svg class="abs" style="left:603px;top:95px;" width="18" height="16" viewBox="0 0 18 16"><path d="M1.5 0.5H9.5V3.5H1.5ZM5.5 0.5V3.5M1.5 9.5H9.5V15.5H1.5ZM5.5 9.5V15.5M1.5 12.5H9.5" fill="#f8f8f8" stroke="#b3afb3" stroke-width="1"/><path d="M4.5 5.5H8.5V8.5H4.5Z" fill="#dedbde" stroke="#b3afb3" stroke-width="1"/><path d="M9.6 4L16.6 10.6M16.6 4L9.6 10.6" stroke="#b3afb3" stroke-width="1.4"/></svg>
<span class="tx" style="left:622.52px;top:96.84px;font-family:'Liberation Sans','DejaVu Sans',sans-serif;font-size:12px;line-height:14px;color:#a6a6a6;transform:scaleX(0.9774);transform-origin:0 0;">Delete</span>
<svg class="abs" style="left:666px;top:102px;" width="5" height="3" viewBox="0 0 5 3"><path d="M0 0H5L2.5 3Z" fill="#b3afb3"/></svg>
<svg class="abs" style="left:603px;top:117px;" width="17" height="18" viewBox="0 0 17 18"><path d="M1.2 0.6V3.6M14 0.6V3.6M2.6 2.1H12.6M4.4 0.7L2.9 2.1L4.4 3.5M10.8 0.7L12.3 2.1L10.8 3.5" fill="none" stroke="#2e75b6" stroke-width="1.1"/><path d="M1.5 5.5H15.5V14.5H1.5Z" fill="#fff" stroke="#5e5e5e" stroke-width="1"/><path d="M1.5 8.5H15.5M1.5 11.5H15.5M5 5.5V14.5M9 5.5V14.5M12.5 5.5V14.5" fill="none" stroke="#a0a0a0" stroke-width="0.9"/><rect x="4.5" y="8" width="4.6" height="3.8" fill="#2e75b6"/><path d="M1.5 15.6C3.5 17 6.5 17 8.2 15.8C10 17 13 17 15.5 15.6" fill="none" stroke="#5e5e5e" stroke-width="0.9"/></svg>
<span class="tx" style="left:623.31px;top:119.84px;font-family:'Liberation Sans','DejaVu Sans',sans-serif;font-size:12px;line-height:14px;color:#1e1e1e;transform:scaleX(0.9919);transform-origin:0 0;">Format</span>
<svg class="abs" style="left:664px;top:125px;" width="5" height="3" viewBox="0 0 5 3"><path d="M0 0H5L2.5 3Z" fill="#444444"/></svg>
<span class="tx" style="left:625.98px;top:143.66px;font-family:'Liberation Sans','DejaVu Sans',sans-serif;font-size:10.5px;line-height:13px;color:#1e1e1e;transform:scaleX(1.0311);transform-origin:0 0;">Cells</span>
<div class="abs" style="left:680px;top:70px;width:1px;height:84px;background:#d4d4d4;"></div>
<div class="abs" style="left:687px;top:70px;width:30px;height:30px;background:#fdfdfd;border:1px solid #cdcdcd"></div>
<svg class="abs" style="left:695px;top:79px;" width="14" height="13" viewBox="0 0 14 13"><circle cx="8.8" cy="4.6" r="3.6" fill="none" stroke="#2e75b6" stroke-width="1.5"/><path d="M6 7.5L1 12" stroke="#2e75b6" stroke-width="2"/></svg>
<span class="tx" style="left:683.47px;top:106.64px;font-family:'Liberation Sans','DejaVu Sans',sans-serif;font-size:12px;line-height:14px;color:#1e1e1e;transform:scaleX(1.0314);transform-origin:0 0;">Editing</span>
<svg class="abs" style="left:700px;top:127px;" width="5" height="3" viewBox="0 0 5 3"><path d="M0 0H5L2.5 3Z" fill="#444444"/></svg>
<div class="abs" style="left:724px;top:70px;width:1px;height:84px;background:#d4d4d4;"></div>
<svg class="abs" style="left:738.5px;top:146px;" width="10" height="8" viewBox="0 0 10 8"><path d="M1 6.6L5 2.4L9 6.6" fill="none" stroke="#666" stroke-width="2"/></svg>
<div class="abs" style="left:6px;top:169px;width:102px;height:26px;background:#fff;border:1px solid #d0d0d0"></div>
<span class="tx" style="left:12.29px;top:175.54px;font-family:'Liberation Sans','DejaVu Sans',sans-serif;font-size:12px;line-height:14px;color:#333;transform:scaleX(1.0113);transform-origin:0 0;">E2</span>
<svg class="abs" style="left:94.5px;top:179px;" width="7" height="4" viewBox="0 0 7 4"><path d="M0 0H7L3.5 4Z" fill="#777"/></svg>
<div class="abs" style="left:122px;top:177.5px;width:2px;height:2px;background:#b9b9b9;"></div>
<div class="abs" style="left:122px;top:181px;width:2px;height:2px;background:#b9b9b9;"></div>
<div class="abs" style="left:122px;top:184.5px;width:2px;height:2px;background:#b9b9b9;"></div>
<div class="abs" style="left:138px;top:169px;width:110px;height:26px;background:#fff;border:1px solid #d0d0d0"></div>
<svg class="abs" style="left:151px;top:177px;" width="12" height="11" viewBox="0 0 12 11"><path d="M1 0.8L11 10.2M11 0.8L1 10.2" stroke="#777" stroke-width="2"/></svg>
<svg class="abs" style="left:186px;top:177px;" width="14" height="11" viewBox="0 0 14 11"><path d="M1 6L5 10L13 1" fill="none" stroke="#777" stroke-width="2.4"/></svg>
<span class="tx" style="left:223.95px;top:171.64px;font-family:'Liberation Serif','DejaVu Serif',serif;font-size:15px;line-height:18px;color:#3a3a3a;font-style:italic;">f</span>
<span class="tx" style="left:230.25px;top:176.26px;font-family:'Liberation Serif','DejaVu Serif',serif;font-size:10.5px;line-height:13px;color:#4a4a4a;font-weight:700;font-style:italic;">x</span>
<div class="abs" style="left:251px;top:169px;width:502px;height:66px;background:#fff;border:1px solid #d0d0d0"></div>
<span class="tx" style="left:263.21px;top:175.44px;font-family:'Liberation Sans','DejaVu Sans',sans-serif;font-size:12px;line-height:14px;color:#2b2b2b;transform:scaleX(1.1463);transform-origin:0 0;">ThuThuatPhanMem.vn</span>
<svg class="abs" style="left:740px;top:177px;" width="9" height="7" viewBox="0 0 9 7"><path d="M1 6L4.5 2.3L8 6" fill="none" stroke="#666" stroke-width="2"/></svg>
<div class="abs" style="left:1px;top:244px;width:736px;height:374px;background:#fff;"></div>
<div class="abs" style="left:1px;top:244px;width:736px;height:18px;background:#e6e6e6;"></div>
<div class="abs" style="left:1px;top:261px;width:736px;height:1px;background:#ababab;"></div>
<div class="abs" style="left:1px;top:262px;width:25px;height:356px;background:#e6e6e6;"></div>
<div class="abs" style="left:26px;top:244px;width:1px;height:374px;background:#ababab;"></div>
<svg class="abs" style="left:14px;top:249px;" width="9" height="9" viewBox="0 0 9 9"><path d="M9 0V9H0Z" fill="#c2c2c2"/></svg>
<div class="abs" style="left:68px;top:246px;width:1px;height:15px;background:#c4c4c4;"></div>
<div class="abs" style="left:132px;top:246px;width:1px;height:15px;background:#c4c4c4;"></div>
<div class="abs" style="left:204px;top:246px;width:1px;height:15px;background:#c4c4c4;"></div>
<div class="abs" style="left:332px;top:246px;width:1px;height:15px;background:#c4c4c4;"></div>
<div class="abs" style="left:444px;top:246px;width:1px;height:15px;background:#c4c4c4;"></div>
<div class="abs" style="left:533px;top:246px;width:1px;height:15px;background:#c4c4c4;"></div>
<div class="abs" style="left:614px;top:246px;width:1px;height:15px;background:#c4c4c4;"></div>
<div class="abs" style="left:726px;top:246px;width:1px;height:15px;background:#c4c4c4;"></div>
<div class="abs" style="left:333px;top:245px;width:111px;height:15px;background:#d2d2d2;"></div>
<div class="abs" style="left:333px;top:260px;width:112px;height:2px;background:#217346;"></div>
<div class="ch" style="left:27px;width:41px;color:#262626;background:transparent">A</div>
<div class="ch" style="left:69px;width:63px;color:#262626;background:transparent">B</div>
<div class="ch" style="left:133px;width:71px;color:#262626;background:transparent">C</div>
<div class="ch" style="left:205px;width:127px;color:#262626;background:transparent">D</div>
<div class="ch" style="left:333px;width:111px;color:#217346;background:transparent">E</div>
<div class="ch" style="left:445px;width:88px;color:#262626;background:transparent">F</div>
<div class="ch" style="left:534px;width:80px;color:#262626;background:transparent">G</div>
<div class="ch" style="left:615px;width:111px;color:#262626;background:transparent">H</div>
<div class="abs" style="left:1px;top:282px;width:25px;height:21px;background:#d4d4d4;"></div>
<div class="abs" style="left:25px;top:282px;width:2px;height:22px;background:#217346;"></div>
<div class="rh" style="top:265px;color:#262626;background:transparent;transform:scaleX(0.9)">1</div>
<div class="abs" style="left:1px;top:282px;width:25px;height:1px;background:#ababab;"></div>
<div class="rh" style="top:286px;color:#217346;background:transparent;transform:scaleX(0.9)">2</div>
<div class="abs" style="left:1px;top:303px;width:25px;height:1px;background:#ababab;"></div>
<div class="rh" style="top:307px;color:#262626;background:transparent;transform:scaleX(0.9)">3</div>
<div class="abs" style="left:1px;top:324px;width:25px;height:1px;background:#ababab;"></div>
<div class="rh" style="top:328px;color:#262626;background:transparent;transform:scaleX(0.9)">4</div>
<div class="abs" style="left:1px;top:345px;width:25px;height:1px;background:#ababab;"></div>
<div class="rh" style="top:349px;color:#262626;background:transparent;transform:scaleX(0.9)">5</div>
<div class="abs" style="left:1px;top:367px;width:25px;height:1px;background:#ababab;"></div>
<div class="rh" style="top:414px;color:#262626;background:transparent;transform:scaleX(0.9)">6</div>
<div class="abs" style="left:1px;top:431px;width:25px;height:1px;background:#ababab;"></div>
<div class="rh" style="top:435px;color:#262626;background:transparent;transform:scaleX(0.9)">7</div>
<div class="abs" style="left:1px;top:452px;width:25px;height:1px;background:#ababab;"></div>
<div class="rh" style="top:456px;color:#262626;background:transparent;transform:scaleX(0.9)">8</div>
<div class="abs" style="left:1px;top:473px;width:25px;height:1px;background:#ababab;"></div>
<div class="rh" style="top:477px;color:#262626;background:transparent;transform:scaleX(0.9)">9</div>
<div class="abs" style="left:1px;top:494px;width:25px;height:1px;background:#ababab;"></div>
<div class="rh" style="top:498px;left:2px;color:#262626;background:transparent;transform:scaleX(0.9)">10</div>
<div class="abs" style="left:1px;top:515px;width:25px;height:1px;background:#ababab;"></div>
<div class="rh" style="top:519px;left:2px;color:#262626;background:transparent;transform:scaleX(0.9)">11</div>
<div class="abs" style="left:1px;top:536px;width:25px;height:1px;background:#ababab;"></div>
<div class="rh" style="top:540px;left:2px;color:#262626;background:transparent;transform:scaleX(0.9)">12</div>
<div class="abs" style="left:1px;top:557px;width:25px;height:1px;background:#ababab;"></div>
<div class="rh" style="top:561px;left:2px;color:#262626;background:transparent;transform:scaleX(0.9)">13</div>
<div class="abs" style="left:1px;top:578px;width:25px;height:1px;background:#ababab;"></div>
<div class="rh" style="top:582px;left:2px;color:#262626;background:transparent;transform:scaleX(0.9)">14</div>
<div class="abs" style="left:1px;top:600px;width:25px;height:1px;background:#ababab;"></div>
<div class="rh" style="top:606px;left:2px;color:#262626;background:transparent;transform:scaleX(0.9)">15</div>
<div class="abs" style="left:27px;top:282px;width:710px;height:1px;background:#d4d4d4;"></div>
<div class="abs" style="left:27px;top:303px;width:710px;height:1px;background:#d4d4d4;"></div>
<div class="abs" style="left:27px;top:324px;width:710px;height:1px;background:#d4d4d4;"></div>
<div class="abs" style="left:27px;top:345px;width:710px;height:1px;background:#d4d4d4;"></div>
<div class="abs" style="left:27px;top:367px;width:710px;height:1px;background:#d4d4d4;"></div>
<div class="abs" style="left:68px;top:283px;width:1px;height:20px;background:#d4d4d4;"></div>
<div class="abs" style="left:68px;top:346px;width:1px;height:20px;background:#d4d4d4;"></div>
<div class="abs" style="left:132px;top:283px;width:1px;height:20px;background:#d4d4d4;"></div>
<div class="abs" style="left:132px;top:346px;width:1px;height:20px;background:#d4d4d4;"></div>
<div class="abs" style="left:204px;top:283px;width:1px;height:20px;background:#d4d4d4;"></div>
<div class="abs" style="left:204px;top:346px;width:1px;height:20px;background:#d4d4d4;"></div>
<div class="abs" style="left:332px;top:283px;width:1px;height:20px;background:#d4d4d4;"></div>
<div class="abs" style="left:332px;top:346px;width:1px;height:20px;background:#d4d4d4;"></div>
<div class="abs" style="left:444px;top:283px;width:1px;height:20px;background:#d4d4d4;"></div>
<div class="abs" style="left:444px;top:346px;width:1px;height:20px;background:#d4d4d4;"></div>
<div class="abs" style="left:533px;top:283px;width:1px;height:20px;background:#d4d4d4;"></div>
<div class="abs" style="left:533px;top:346px;width:1px;height:20px;background:#d4d4d4;"></div>
<div class="abs" style="left:614px;top:283px;width:1px;height:20px;background:#d4d4d4;"></div>
<div class="abs" style="left:614px;top:346px;width:1px;height:20px;background:#d4d4d4;"></div>
<div class="abs" style="left:726px;top:283px;width:1px;height:20px;background:#d4d4d4;"></div>
<div class="abs" style="left:726px;top:346px;width:1px;height:20px;background:#d4d4d4;"></div>
<div class="abs" style="left:332px;top:304px;width:1px;height:20px;background:#d4d4d4;"></div>
<div class="abs" style="left:444px;top:304px;width:1px;height:20px;background:#d4d4d4;"></div>
<div class="abs" style="left:533px;top:304px;width:1px;height:20px;background:#d4d4d4;"></div>
<div class="abs" style="left:614px;top:304px;width:1px;height:20px;background:#d4d4d4;"></div>
<div class="abs" style="left:726px;top:304px;width:1px;height:20px;background:#d4d4d4;"></div>
<div class="abs" style="left:726px;top:262px;width:1px;height:105px;background:#d4d4d4;"></div>
<div class="abs" style="left:27px;top:367px;width:701px;height:65px;background:#0000ff;"></div>
<div class="abs" style="left:27px;top:432px;width:306px;height:147px;background:#00ff00;"></div>
<div class="abs" style="left:333px;top:432px;width:395px;height:147px;background:#00ffff;"></div>
<div class="abs" style="left:27px;top:579px;width:701px;height:21px;background:#00ffff;"></div>
<div class="abs" style="left:27px;top:602px;width:700px;height:16px;background:#ffff99;"></div>
<div class="abs" style="left:27px;top:366px;width:701px;height:1px;background:#000;"></div>
<div class="abs" style="left:27px;top:368px;width:699px;height:1px;background:#000;"></div>
<div class="abs" style="left:27px;top:366px;width:1px;height:236px;background:#000;"></div>
<div class="abs" style="left:725px;top:368px;width:1px;height:232px;background:#000;"></div>
<div class="abs" style="left:727px;top:366px;width:1px;height:236px;background:#000;"></div>
<div class="abs" style="left:27px;top:599px;width:699px;height:1px;background:#000;"></div>
<div class="abs" style="left:27px;top:600px;width:700px;height:1px;background:#f4f08c;"></div>
<div class="abs" style="left:27px;top:601px;width:701px;height:1px;background:#000;"></div>
<div class="abs" style="left:27px;top:431px;width:700px;height:1px;background:#000;"></div>
<div class="abs" style="left:27px;top:452px;width:700px;height:1px;background:#000;"></div>
<div class="abs" style="left:27px;top:473px;width:700px;height:1px;background:#000;"></div>
<div class="abs" style="left:27px;top:494px;width:700px;height:1px;background:#000;"></div>
<div class="abs" style="left:27px;top:515px;width:700px;height:1px;background:#000;"></div>
<div class="abs" style="left:27px;top:536px;width:700px;height:1px;background:#000;"></div>
<div class="abs" style="left:27px;top:557px;width:700px;height:1px;background:#000;"></div>
<div class="abs" style="left:27px;top:578px;width:700px;height:1px;background:#000;"></div>
<div class="abs" style="left:68px;top:367px;width:1px;height:212px;background:#000;"></div>
<div class="abs" style="left:132px;top:367px;width:1px;height:212px;background:#000;"></div>
<div class="abs" style="left:204px;top:367px;width:1px;height:212px;background:#000;"></div>
<div class="abs" style="left:332px;top:367px;width:1px;height:233px;background:#000;"></div>
<div class="abs" style="left:444px;top:367px;width:1px;height:233px;background:#000;"></div>
<div class="abs" style="left:533px;top:367px;width:1px;height:233px;background:#000;"></div>
<div class="abs" style="left:614px;top:367px;width:1px;height:233px;background:#000;"></div>
<div class="c" style="top:263.20px;color:#000;font-weight:bold;left:27px;width:699px;text-align:center;transform:scaleX(0.972);transform-origin:50% 0;text-decoration:underline;text-decoration-thickness:2px;text-underline-offset:2px;text-decoration-skip-ink:none;">BÀI THỰC HÀNH EXCEL SỐ 1</div>
<div class="c" style="top:305.60px;color:#000;left:28.8px;transform:scaleX(0.929);transform-origin:0 0;">1) Nhập và định dạng dữ liệu như bảng tính sau:</div>
<div class="c" style="top:326.20px;color:#ff0000;font-weight:bold;left:27px;width:699px;text-align:center;transform:scaleX(0.982);transform-origin:50% 0;">BẢNG KÊ HÀNG NHẬP KHO</div>
<div class="c" style="top:326.20px;color:#000;font-weight:bold;left:729px;">w</div>
<div class="c" style="top:347.60px;color:#0000ff;font-weight:bold;right:429px;">Ngày:</div>
<div class="c" style="top:347.60px;color:#0000ff;font-weight:bold;left:333px;width:111px;text-align:center;">28</div>
<div class="c" style="top:369.05px;color:#fff;font-weight:bold;left:27px;width:41px;text-align:center;">S</div><div class="c" style="top:389.75px;color:#fff;font-weight:bold;left:27px;width:41px;text-align:center;">T</div><div class="c" style="top:410.45px;color:#fff;font-weight:bold;left:27px;width:41px;text-align:center;">T</div>
<div class="c" style="top:379.40px;color:#fff;font-weight:bold;left:69px;width:63px;text-align:center;transform:scaleX(0.95);transform-origin:50% 0;">TÊN</div><div class="c" style="top:400.10px;color:#fff;font-weight:bold;left:69px;width:63px;text-align:center;transform:scaleX(0.95);transform-origin:50% 0;">HÀNG</div>
<div class="c" style="top:379.40px;color:#fff;font-weight:bold;left:133px;width:71px;text-align:center;transform:scaleX(0.95);transform-origin:50% 0;">SỐ</div><div class="c" style="top:400.10px;color:#fff;font-weight:bold;left:133px;width:71px;text-align:center;transform:scaleX(0.95);transform-origin:50% 0;">LƯỢNG</div>
<div class="c" style="top:379.40px;color:#fff;font-weight:bold;left:205px;width:127px;text-align:center;transform:scaleX(0.95);transform-origin:50% 0;">ĐƠN</div><div class="c" style="top:400.10px;color:#fff;font-weight:bold;left:205px;width:127px;text-align:center;transform:scaleX(0.95);transform-origin:50% 0;">GIÁ</div>
<div class="c" style="top:379.40px;color:#fff;font-weight:bold;left:333px;width:111px;text-align:center;transform:scaleX(0.95);transform-origin:50% 0;">TRỊ</div><div class="c" style="top:400.10px;color:#fff;font-weight:bold;left:333px;width:111px;text-align:center;transform:scaleX(0.95);transform-origin:50% 0;">GIÁ</div>
<div class="c" style="top:389.75px;color:#fff;font-weight:bold;left:445px;width:88px;text-align:center;transform:scaleX(0.95);transform-origin:50% 0;">THUẾ</div>
<div class="c" style="top:369.05px;color:#fff;font-weight:bold;left:534px;width:80px;text-align:center;transform:scaleX(0.95);transform-origin:50% 0;">CƯỚC</div><div class="c" style="top:389.75px;color:#fff;font-weight:bold;left:534px;width:80px;text-align:center;transform:scaleX(0.95);transform-origin:50% 0;">CHUYÊN</div><div class="c" style="top:410.45px;color:#fff;font-weight:bold;left:534px;width:80px;text-align:center;transform:scaleX(0.95);transform-origin:50% 0;">CHỞ</div>
<div class="c" style="top:389.75px;color:#fff;font-weight:bold;left:615px;width:111px;text-align:center;transform:scaleX(0.95);transform-origin:50% 0;">CỘNG</div>
<div class="c" style="top:433.20px;color:#000;right:693.5px;">1</div>
<div class="c" style="top:433.20px;color:#000;left:71px;">Video</div>
<div class="c" style="top:433.20px;color:#000;left:135px;">100</div>
<div class="c" style="top:433.20px;color:#000;left:207px;">4,000,000</div>
<div class="c" style="top:433.20px;color:#0000ff;font-weight:bold;left:335.3px;">400,000,000</div>
<div class="c" style="top:433.20px;color:#0000ff;font-weight:bold;left:447px;">20,000,000</div>
<div class="c" style="top:433.20px;color:#0000ff;font-weight:bold;left:536px;">150,000</div>
<div class="c" style="top:433.20px;color:#0000ff;font-weight:bold;left:617px;">420,150,000</div>
<div class="c" style="top:454.20px;color:#000;right:693.5px;">2</div>
<div class="c" style="top:454.20px;color:#000;left:71px;">Ghế</div>
<div class="c" style="top:454.20px;color:#000;left:135px;">50</div>
<div class="c" style="top:454.20px;color:#000;left:207px;">150,000</div>
<div class="c" style="top:454.20px;color:#0000ff;font-weight:bold;left:335.3px;">7,500,000</div>
<div class="c" style="top:454.20px;color:#0000ff;font-weight:bold;left:447px;">375,000</div>
<div class="c" style="top:454.20px;color:#0000ff;font-weight:bold;left:536px;">75,000</div>
<div class="c" style="top:454.20px;color:#0000ff;font-weight:bold;left:617px;">7,950,000</div>
<div class="c" style="top:475.20px;color:#000;right:693.5px;">3</div>
<div class="c" style="top:475.20px;color:#000;left:71px;transform:scaleX(0.94);transform-origin:0 0;">Giường</div>
<div class="c" style="top:475.20px;color:#000;left:135px;">58</div>
<div class="c" style="top:475.20px;color:#000;left:207px;">1,200,000</div>
<div class="c" style="top:475.20px;color:#0000ff;font-weight:bold;left:335.3px;">69,600,000</div>
<div class="c" style="top:475.20px;color:#0000ff;font-weight:bold;left:447px;">3,480,000</div>
<div class="c" style="top:475.20px;color:#0000ff;font-weight:bold;left:536px;">87,000</div>
<div class="c" style="top:475.20px;color:#0000ff;font-weight:bold;left:617px;">73,167,000</div>
<div class="c" style="top:496.20px;color:#000;right:693.5px;">4</div>
<div class="c" style="top:496.20px;color:#000;left:71px;">Tủ</div>
<div class="c" style="top:496.20px;color:#000;left:135px;">79</div>
<div class="c" style="top:496.20px;color:#000;left:207px;">850,000</div>
<div class="c" style="top:496.20px;color:#0000ff;font-weight:bold;left:335.3px;">67,150,000</div>
<div class="c" style="top:496.20px;color:#0000ff;font-weight:bold;left:447px;">3,357,500</div>
<div class="c" style="top:496.20px;color:#0000ff;font-weight:bold;left:536px;">118,500</div>
<div class="c" style="top:496.20px;color:#0000ff;font-weight:bold;left:617px;">70,626,000</div>
<div class="c" style="top:517.20px;color:#000;right:693.5px;">5</div>
<div class="c" style="top:517.20px;color:#000;left:71px;">Nệm</div>
<div class="c" style="top:517.20px;color:#000;left:135px;">92</div>
<div class="c" style="top:517.20px;color:#000;left:207px;">200,000</div>
<div class="c" style="top:517.20px;color:#0000ff;font-weight:bold;left:335.3px;">18,400,000</div>
<div class="c" style="top:517.20px;color:#0000ff;font-weight:bold;left:447px;">920,000</div>
<div class="c" style="top:517.20px;color:#0000ff;font-weight:bold;left:536px;">138,000</div>
<div class="c" style="top:517.20px;color:#0000ff;font-weight:bold;left:617px;">19,458,000</div>
<div class="c" style="top:538.20px;color:#000;right:693.5px;">6</div>
<div class="c" style="top:538.20px;color:#000;left:71px;">Tivi</div>
<div class="c" style="top:538.20px;color:#000;left:135px;">220</div>
<div class="c" style="top:538.20px;color:#000;left:207px;">2,500,000</div>
<div class="c" style="top:538.20px;color:#0000ff;font-weight:bold;left:335.3px;">550,000,000</div>
<div class="c" style="top:538.20px;color:#0000ff;font-weight:bold;left:447px;">27,500,000</div>
<div class="c" style="top:538.20px;color:#0000ff;font-weight:bold;left:536px;">330,000</div>
<div class="c" style="top:538.20px;color:#0000ff;font-weight:bold;left:617px;">577,830,000</div>
<div class="c" style="top:559.20px;color:#000;right:693.5px;">7</div>
<div class="c" style="top:559.20px;color:#000;left:71px;">Bàn</div>
<div class="c" style="top:559.20px;color:#000;left:135px;">199</div>
<div class="c" style="top:559.20px;color:#000;left:207px;">600,000</div>
<div class="c" style="top:559.20px;color:#0000ff;font-weight:bold;left:335.3px;">119,400,000</div>
<div class="c" style="top:559.20px;color:#0000ff;font-weight:bold;left:447px;">5,970,000</div>
<div class="c" style="top:559.20px;color:#0000ff;font-weight:bold;left:536px;">298,500</div>
<div class="c" style="top:559.20px;color:#0000ff;font-weight:bold;left:617px;">125,668,500</div>
<div class="c" style="top:580.40px;color:#ff0000;font-weight:bold;left:27px;width:304px;text-align:center;transform:scaleX(0.98);transform-origin:50% 0;">TỔNG CỘNG:</div>
<div class="c" style="top:580.40px;color:#ff0000;font-weight:bold;left:335.3px;">1,232,050,000</div>
<div class="c" style="top:580.40px;color:#ff0000;font-weight:bold;left:447px;">61,602,500</div>
<div class="c" style="top:580.40px;color:#ff0000;font-weight:bold;left:536px;">1,197,000</div>
<div class="c" style="top:580.40px;color:#ff0000;font-weight:bold;left:617px;">1,294,849,500</div>
<div class="c" style="top:602.70px;color:#000;font-weight:bold;left:29px;transform:scaleX(0.955);transform-origin:0 0;">Yêu cầu tính toán:</div>
<div class="abs" style="left:331px;top:281px;width:115px;height:24px;background:#fff;border:2px solid #217346;border-right:none"></div>
<div class="abs" style="left:374px;top:283px;width:1px;height:20px;background:#d9d9d9;"></div>
<div class="abs" style="left:442px;top:303px;width:5px;height:5px;background:#217346;border-left:1px solid #fff;border-top:1px solid #fff"></div>
<div class="c" style="top:283.20px;color:#000;left:335.2px;transform:scaleX(0.936);transform-origin:0 0;">ThuThuatPhanMem.vn</div>
<div class="abs" style="left:728px;top:431px;width:8px;height:1px;background:#d4d4d4;"></div>
<div class="abs" style="left:728px;top:452px;width:8px;height:1px;background:#d4d4d4;"></div>
<div class="abs" style="left:728px;top:473px;width:8px;height:1px;background:#d4d4d4;"></div>
<div class="abs" style="left:728px;top:494px;width:8px;height:1px;background:#d4d4d4;"></div>
<div class="abs" style="left:728px;top:515px;width:8px;height:1px;background:#d4d4d4;"></div>
<div class="abs" style="left:728px;top:536px;width:8px;height:1px;background:#d4d4d4;"></div>
<div class="abs" style="left:728px;top:557px;width:8px;height:1px;background:#d4d4d4;"></div>
<div class="abs" style="left:728px;top:578px;width:8px;height:1px;background:#d4d4d4;"></div>
<div class="abs" style="left:728px;top:600px;width:8px;height:1px;background:#d4d4d4;"></div>
<div class="abs" style="left:736px;top:262px;width:1px;height:357px;background:#ababab;"></div>
<div class="abs" style="left:1px;top:618px;width:736px;height:1px;background:#b8b8b8;"></div>
<div class="abs" style="left:737px;top:244px;width:21px;height:375px;background:#e6e6e6;"></div>
<div class="abs" style="left:740px;top:247px;width:15px;height:15px;background:#fff;border:1px solid #ababab"></div>
<svg class="abs" style="left:744px;top:252px;" width="7" height="4" viewBox="0 0 7 4"><path d="M0 4H7L3.5 0Z" fill="#777"/></svg>
<div class="abs" style="left:740px;top:263px;width:15px;height:227px;background:#fff;border:1px solid #ababab"></div>
<div class="abs" style="left:740px;top:490px;width:15px;height:114px;background:#dedede;"></div>
<div class="abs" style="left:740px;top:604px;width:15px;height:15px;background:#fff;border:1px solid #ababab"></div>
<svg class="abs" style="left:744px;top:610px;" width="7" height="4" viewBox="0 0 7 4"><path d="M0 0H7L3.5 4Z" fill="#777"/></svg>
<div class="abs" style="left:1px;top:619px;width:757px;height:27px;background:#e6e6e6;"></div>
<div class="abs" style="left:1px;top:646px;width:757px;height:1px;background:#c9c9c9;"></div>
<div class="abs" style="left:1px;top:647px;width:757px;height:21px;background:#f1f1f1;"></div>
<svg class="abs" style="left:28px;top:628px;" width="5" height="8" viewBox="0 0 5 8"><path d="M5 0V8L0 4Z" fill="#bdbdbd"/></svg>
<svg class="abs" style="left:57px;top:628px;" width="5" height="8" viewBox="0 0 5 8"><path d="M0 0V8L5 4Z" fill="#1e6b3e"/></svg>
<div class="abs" style="left:101px;top:623px;width:1px;height:19px;background:#ababab;"></div>
<span class="tx" style="left:114.70px;top:623.50px;font-family:'Liberation Sans','DejaVu Sans',sans-serif;font-size:13px;line-height:16px;color:#444;transform:scaleX(1.0008);transform-origin:0 0;">Bài mở đầu</span>
<div class="abs" style="left:195px;top:619px;width:55px;height:24px;background:#fff;"></div>
<div class="abs" style="left:195px;top:641px;width:55px;height:2px;background:#217346;"></div>
<span class="tx" style="left:206.58px;top:623.50px;font-family:'Liberation Sans','DejaVu Sans',sans-serif;font-size:13px;line-height:16px;color:#217346;font-weight:700;transform:scaleX(0.9567);transform-origin:0 0;">Bai 1</span>
<span class="tx" style="left:261.36px;top:623.50px;font-family:'Liberation Sans','DejaVu Sans',sans-serif;font-size:13px;line-height:16px;color:#444;transform:scaleX(0.9429);transform-origin:0 0;">Bai 2</span>
<span class="tx" style="left:315.35px;top:623.50px;font-family:'Liberation Sans','DejaVu Sans',sans-serif;font-size:13px;line-height:16px;color:#444;transform:scaleX(0.9536);transform-origin:0 0;">Bai 3</span>
<span class="tx" style="left:369.34px;top:623.50px;font-family:'Liberation Sans','DejaVu Sans',sans-serif;font-size:13px;line-height:16px;color:#444;transform:scaleX(0.9558);transform-origin:0 0;">Bai 4</span>
<span class="tx" style="left:423.75px;top:623.50px;font-family:'Liberation Sans','DejaVu Sans',sans-serif;font-size:13px;line-height:16px;color:#444;transform:scaleX(0.9500);transform-origin:0 0;">Bai 5</span>
<span class="tx" style="left:477.75px;top:623.50px;font-family:'Liberation Sans','DejaVu Sans',sans-serif;font-size:13px;line-height:16px;color:#444;transform:scaleX(0.9500);transform-origin:0 0;">Bai 6</span>
<span class="tx" style="left:531.75px;top:623.50px;font-family:'Liberation Sans','DejaVu Sans',sans-serif;font-size:13px;line-height:16px;color:#444;transform:scaleX(0.9500);transform-origin:0 0;">Bai 7</span>
<div class="abs" style="left:303px;top:623px;width:1px;height:19px;background:#ababab;"></div>
<div class="abs" style="left:357px;top:623px;width:1px;height:19px;background:#ababab;"></div>
<div class="abs" style="left:411px;top:623px;width:1px;height:19px;background:#ababab;"></div>
<div class="abs" style="left:465px;top:623px;width:1px;height:19px;background:#ababab;"></div>
<div class="abs" style="left:519px;top:623px;width:1px;height:19px;background:#ababab;"></div>
<div class="abs" style="left:573px;top:623px;width:1px;height:19px;background:#ababab;"></div>
<div class="abs" style="left:586px;top:628px;width:1px;height:8px;background:#ece9a0;"></div>
<span class="tx" style="left:595.19px;top:623.50px;font-family:'Liberation Sans','DejaVu Sans',sans-serif;font-size:13px;line-height:16px;color:#1e6b3e;font-weight:700;transform:scaleX(1.0811);transform-origin:0 0;">...</span>
<svg class="abs" style="left:620px;top:624px;" width="16" height="16" viewBox="0 0 16 16"><circle cx="8" cy="8" r="7.2" fill="none" stroke="#777" stroke-width="1.2"/><path d="M8 4.2V11.8M4.2 8H11.8" stroke="#666" stroke-width="1.6"/></svg>
<div class="abs" style="left:656px;top:627px;width:1.5px;height:1.5px;background:#b5b5b5;"></div>
<div class="abs" style="left:656px;top:630.5px;width:1.5px;height:1.5px;background:#b5b5b5;"></div>
<div class="abs" style="left:656px;top:634px;width:1.5px;height:1.5px;background:#b5b5b5;"></div>
<div class="abs" style="left:673px;top:625px;width:15px;height:15px;background:#fff;border:1px solid #ababab"></div>
<svg class="abs" style="left:678px;top:629px;" width="4" height="7" viewBox="0 0 4 7"><path d="M4 0V7L0 3.5Z" fill="#555"/></svg>
<div class="abs" style="left:688px;top:625px;width:21px;height:15px;background:#fff;border:1px solid #ababab;border-left:none"></div>
<div class="abs" style="left:709px;top:625px;width:15px;height:15px;background:#d4d4d4;"></div>
<div class="abs" style="left:724px;top:625px;width:15px;height:15px;background:#fff;border:1px solid #ababab"></div>
<svg class="abs" style="left:730px;top:629px;" width="4" height="7" viewBox="0 0 4 7"><path d="M0 0V7L4 3.5Z" fill="#555"/></svg>
<span class="tx" style="left:8.76px;top:649.79px;font-family:'Liberation Sans','DejaVu Sans',sans-serif;font-size:11px;line-height:13px;color:#333;transform:scaleX(1.0444);transform-origin:0 0;">Edit</span>
<svg class="abs" style="left:59px;top:650px;" width="14" height="14" viewBox="0 0 14 14"><circle cx="3.1" cy="2.9" r="3" fill="#595959"/><path d="M1.7 6V12.5H12.5V1.5" fill="none" stroke="#595959" stroke-width="1"/><rect x="7" y="1" width="6" height="2" fill="#595959"/><rect x="3.4" y="5.8" width="2.1" height="1.1" fill="#595959"/><rect x="6.4" y="5.8" width="2.1" height="1.1" fill="#595959"/><rect x="9.4" y="5.8" width="2.1" height="1.1" fill="#595959"/><rect x="3.4" y="8" width="2.1" height="1.1" fill="#595959"/><rect x="6.4" y="8" width="2.1" height="1.1" fill="#595959"/><rect x="9.4" y="8" width="2.1" height="1.1" fill="#595959"/><rect x="3.4" y="10.1" width="2.1" height="1.1" fill="#595959"/><rect x="6.4" y="10.1" width="2.1" height="1.1" fill="#595959"/><rect x="9.4" y="10.1" width="2.1" height="1.1" fill="#595959"/></svg>
<svg class="abs" style="left:473px;top:650px;" width="13" height="13" viewBox="0 0 13 13"><path d="M0.5 0.5H12.5V12.5H0.5ZM0.5 4.5H12.5M0.5 8.5H12.5M4.5 0.5V12.5M8.5 0.5V12.5" fill="none" stroke="#686868" stroke-width="1"/></svg>
<svg class="abs" style="left:511px;top:650px;" width="14" height="13" viewBox="0 0 14 13"><path d="M0.5 0.5H13.5V12.5H0.5Z" fill="none" stroke="#686868" stroke-width="1"/><path d="M3.5 2.5H10.5V10.5H3.5ZM5 4.5H9M5 6.5H9M5 8.5H9" fill="none" stroke="#686868" stroke-width="1"/></svg>
<svg class="abs" style="left:549px;top:650px;" width="14" height="13" viewBox="0 0 14 13"><path d="M0.5 0.5H13.5V12.5H0.5Z" fill="none" stroke="#686868" stroke-width="1"/><path d="M0.5 7.5H8.5V0.5M4.5 0.5V7.5" fill="none" stroke="#686868" stroke-width="1"/></svg>
<div class="abs" style="left:580px;top:656px;width:6px;height:2px;background:#444;"></div>
<div class="abs" style="left:590px;top:657px;width:100px;height:1px;background:#9a9a9a;"></div>
<div class="abs" style="left:640px;top:654.5px;width:1px;height:5px;background:#9a9a9a;"></div>
<div class="abs" style="left:693px;top:656px;width:8px;height:2px;background:#444;"></div>
<div class="abs" style="left:696px;top:653px;width:2px;height:8px;background:#444;"></div>
<span class="tx" style="left:712.11px;top:649.04px;font-family:'Liberation Sans','DejaVu Sans',sans-serif;font-size:12px;line-height:14px;color:#a8a8a8;transform:scaleX(0.8889);transform-origin:0 0;">100%</span>
<svg class="abs" style="left:0;top:0" width="759" height="669" viewBox="0 0 759 669"><polygon points="294.0,192.1 361.9,264.1 352.8,269.9 384.7,279.7 376.8,247.3 370.5,256.0 302.6,184.1" fill="#f8444a"/><ellipse cx="398" cy="296.3" rx="85.2" ry="11.5" fill="none" stroke="#ee4448" stroke-width="3.2"/><path d="M424 282V296.5M422.3 280.8L424 282.3L425.7 280.8M422.3 297.6L424 296.2L425.7 297.6" fill="none" stroke="#333" stroke-width="0.9"/></svg>

<div id="bl" class="abs"></div>
<div id="br" class="abs"></div>
<div id="bb" class="abs"></div>
</div>
</body>
</html>
